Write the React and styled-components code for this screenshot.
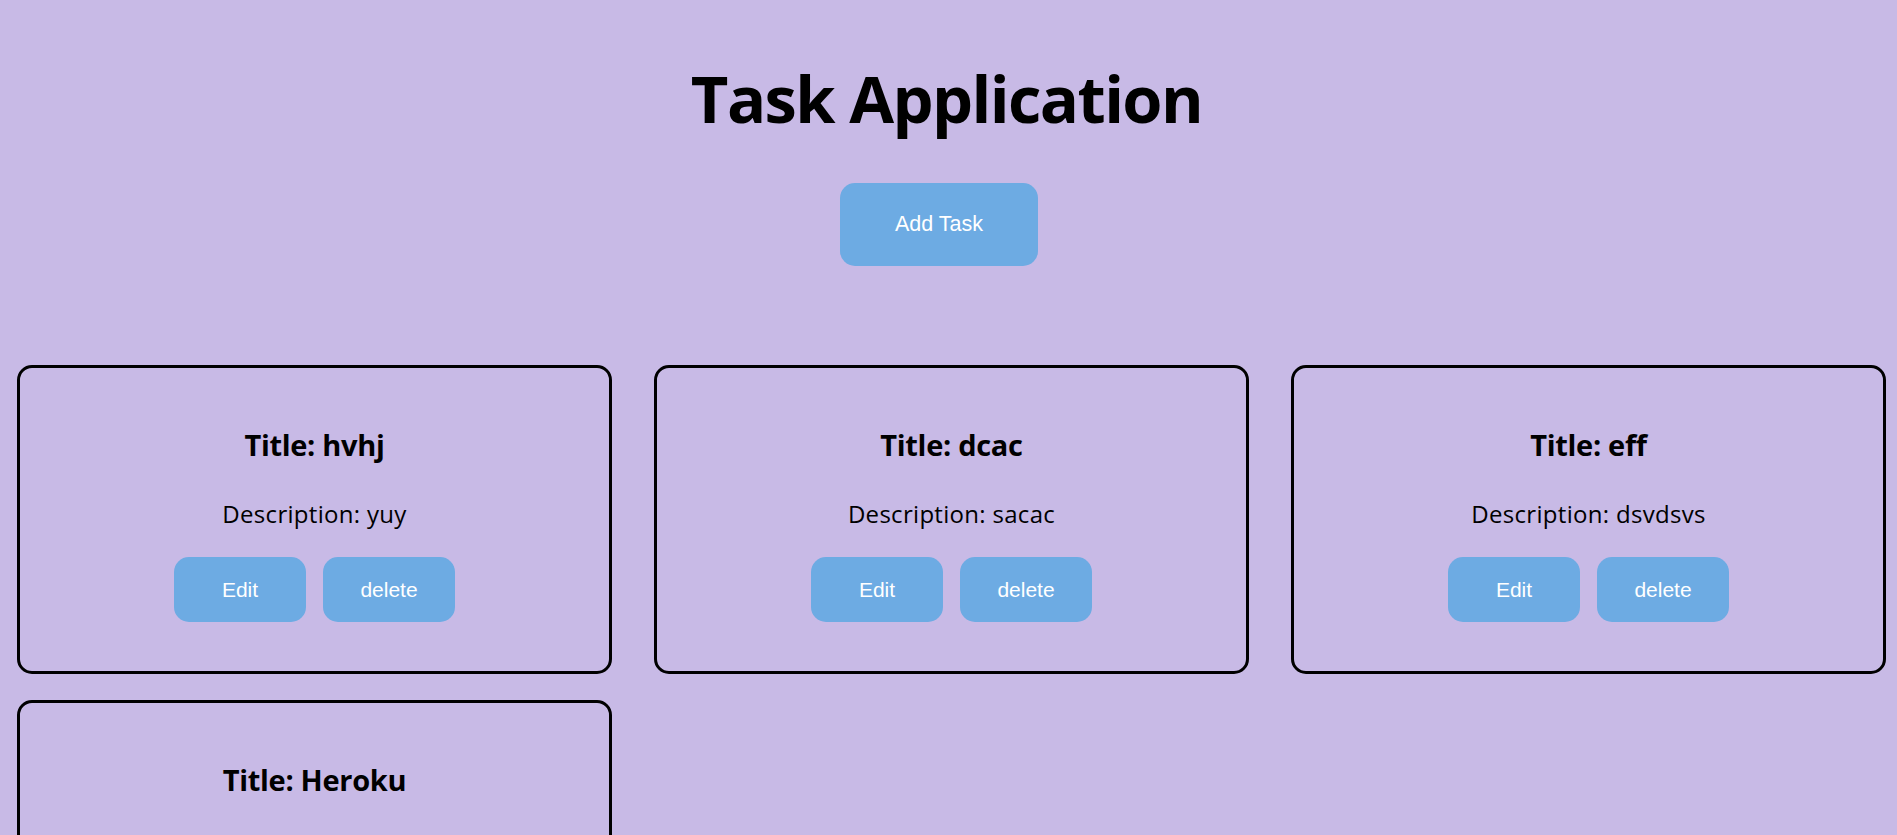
import styled, { createGlobalStyle } from 'styled-components'

const tasks = [
  { id: 1, title: 'hvhj', desc: 'yuy' },
  { id: 2, title: 'dcac', desc: 'sacac' },
  { id: 3, title: 'eff', desc: 'dsvdsvs' },
  { id: 4, title: 'Heroku', desc: 'deploy' },
]

const GlobalStyle = createGlobalStyle`
  html, body {
    margin: 0;
    padding: 0;
    background: #c8bae6;
  }
  body {
    font-family: "Open Sans", "Noto Sans", sans-serif;
    color: #000;
  }
`

const Page = styled.div`
  min-height: 100vh;
  background: #c8bae6;
  padding: 58px 0 40px;
  box-sizing: border-box;
`

const Header = styled.header`
  display: flex;
  flex-direction: column;
  align-items: center;
`

const Heading = styled.h1`
  margin: 0 4px 0 0;
  font-size: 65px;
  line-height: 80px;
  font-weight: 700;
  letter-spacing: -1.6px;
`

const Button = styled.button`
  border: none;
  border-radius: 15px;
  background: #6dabe3;
  color: #fff;
  font-family: "Liberation Sans", Arial, sans-serif;
  font-size: ${p => (p.$big ? '21.5px' : '21px')};
  cursor: pointer;
  width: ${p => (p.$big ? '198px' : '132px')};
  height: ${p => (p.$big ? '83px' : '65px')};
  margin: ${p => (p.$big ? '45px 19px 0 0' : '0')};
  padding: 0;
  &:hover {
    background: #5d9ed9;
  }
`

const Grid = styled.div`
  display: grid;
  grid-template-columns: repeat(3, 1fr);
  column-gap: 42px;
  row-gap: 26px;
  margin-top: 99px;
  padding: 0 11px 0 17px;
`

const Card = styled.div`
  border: 3px solid #000;
  border-radius: 15px;
  padding: 59px 20px 49px;
  display: flex;
  flex-direction: column;
  align-items: center;
  text-align: center;
`

const Title = styled.h2`
  margin: 0;
  font-size: 29px;
  line-height: 36px;
  font-weight: 700;
  letter-spacing: -0.3px;
`

const Desc = styled.p`
  margin: 36px 0 28px;
  font-size: 24px;
  line-height: 30px;
  font-weight: 400;
  letter-spacing: 0.3px;
`

const Actions = styled.div`
  display: flex;
  gap: 17px;
  justify-content: center;
`

export default function App() {
  return (
    <>
      <GlobalStyle />
      <Page>
        <Header>
          <Heading>Task Application</Heading>
          <Button $big>Add Task</Button>
        </Header>
        <Grid>
          {tasks.map(t => (
            <Card key={t.id}>
              <Title>Title: {t.title}</Title>
              <Desc>Description: {t.desc}</Desc>
              <Actions>
                <Button>Edit</Button>
                <Button>delete</Button>
              </Actions>
            </Card>
          ))}
        </Grid>
      </Page>
    </>
  )
}
